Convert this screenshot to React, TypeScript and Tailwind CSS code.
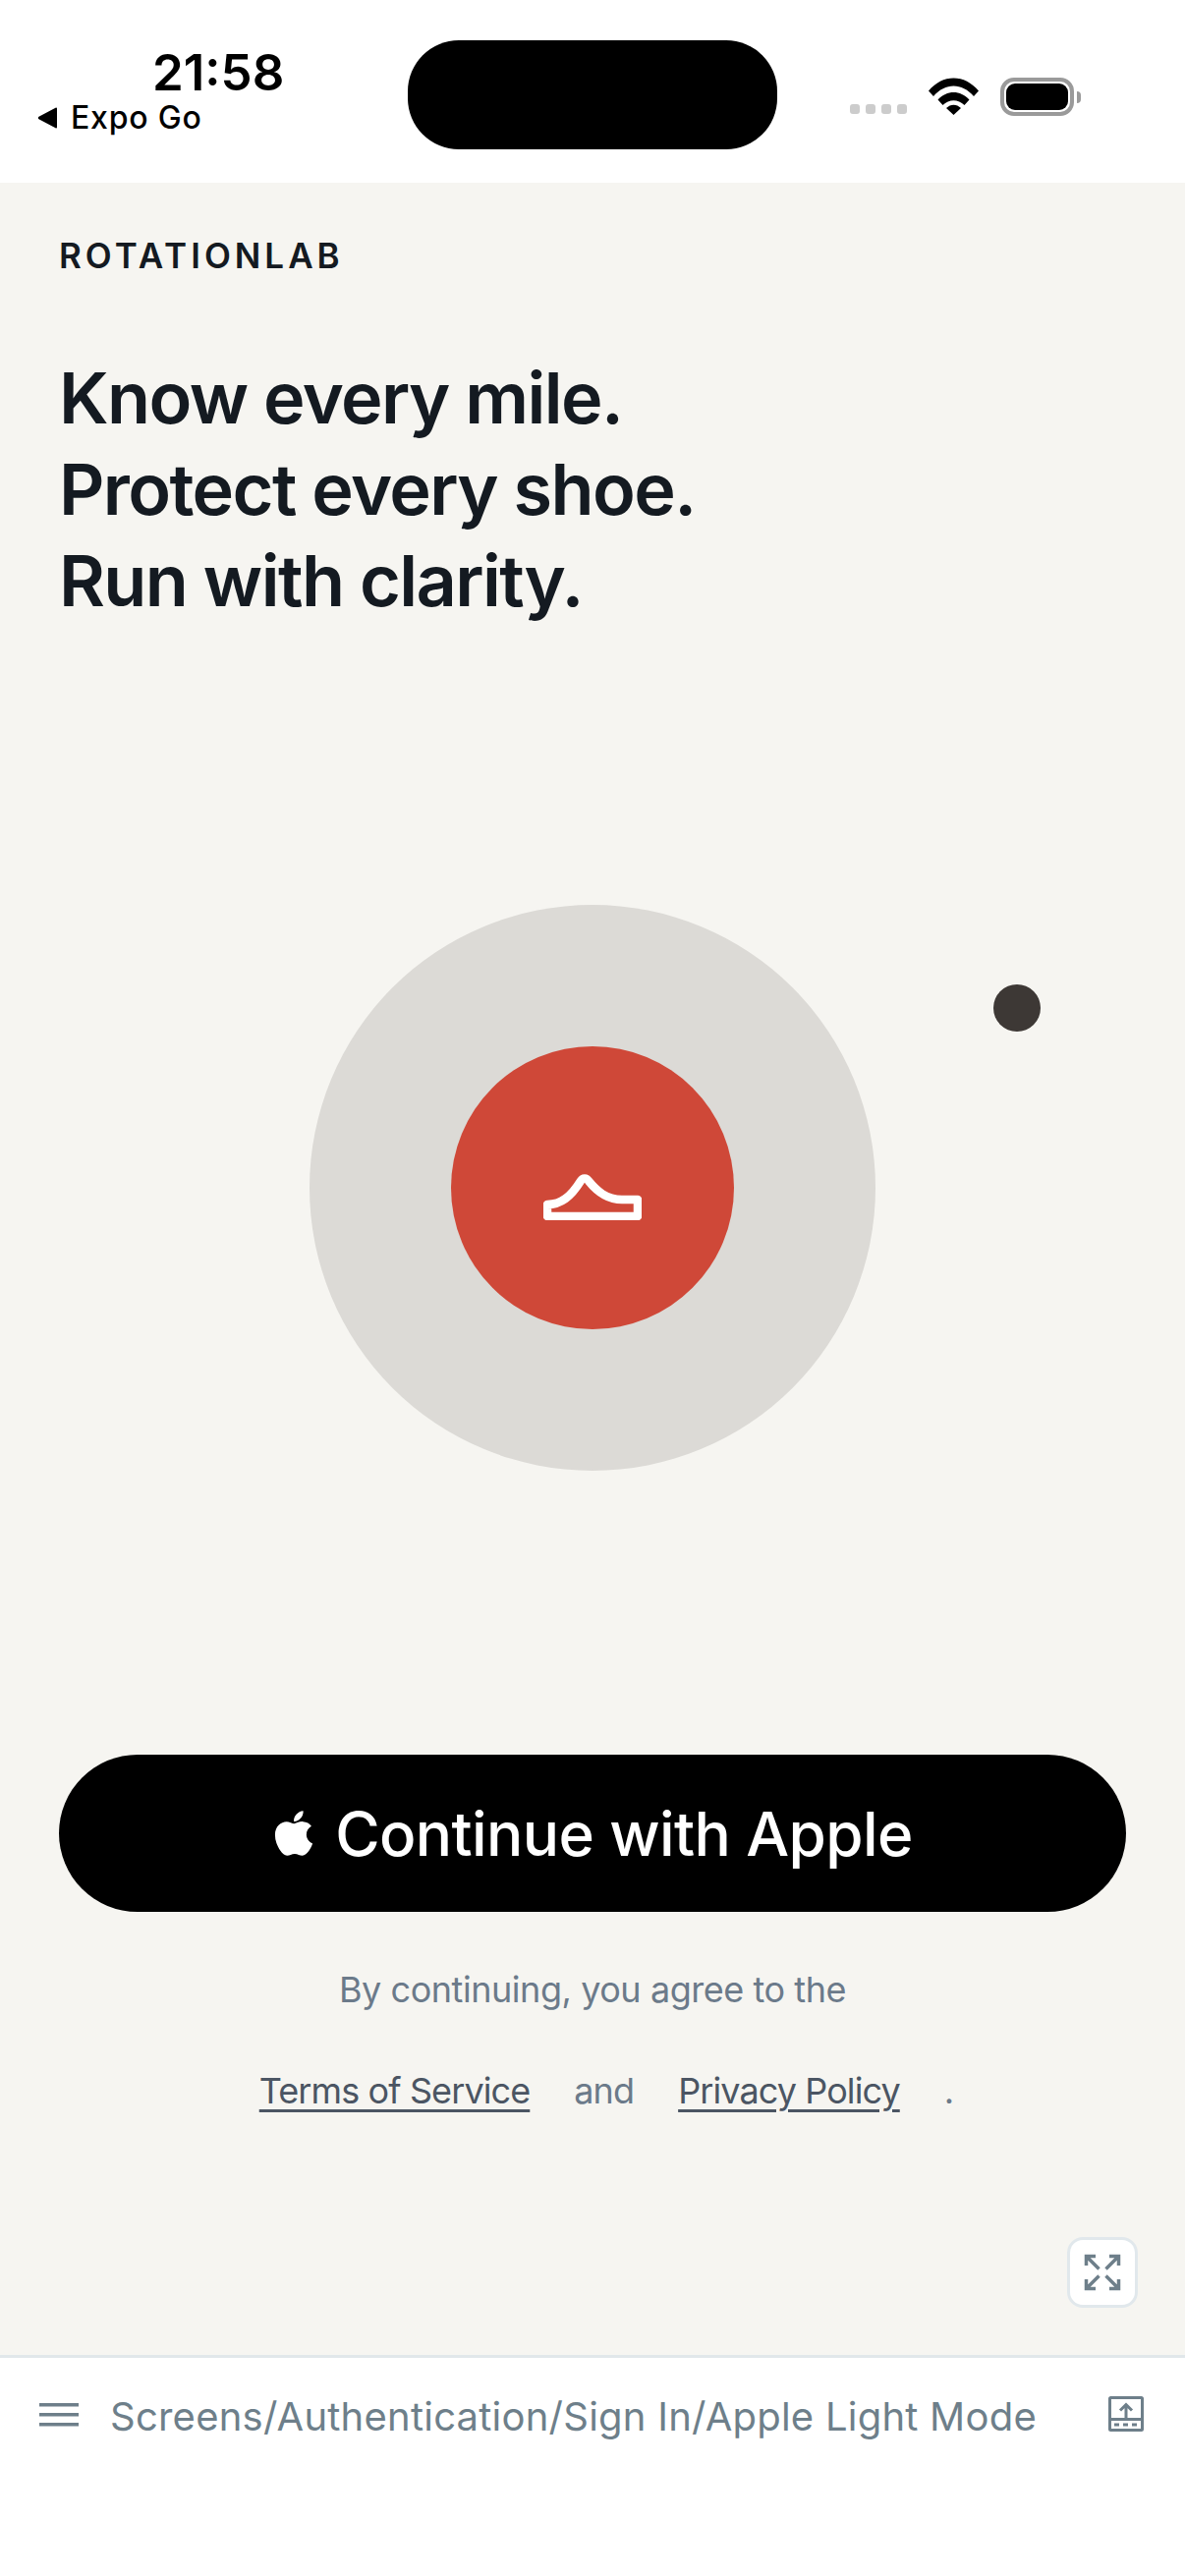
import { FaApple } from "react-icons/fa";

function StatusBar() {
  return (
    <div className="flex h-[186px] shrink-0 bg-white pt-[41px]">
      <div className="w-[415px] pl-[38px]">
        <div className="pl-[117px] pt-[11px] text-[51px] leading-[44px] font-semibold text-black">
          21:58
        </div>
        <div className="mt-[6px] flex items-center">
          <svg width="22" height="22" viewBox="0 0 22 22" className="mr-[12px]">
            <path d="M20 1.5v19a1 1 0 0 1-1.5.8L1.5 12.2a1.4 1.4 0 0 1 0-2.4L18.5.7A1 1 0 0 1 20 1.5z" fill="#000" />
          </svg>
          <span className="text-[32px] leading-[36px] font-medium text-black tracking-[0.8px]">Expo Go</span>
        </div>
      </div>
      <div className="h-[111px] w-[376px] rounded-[52px] bg-black" />
      <div className="flex h-[76px] flex-1 items-end pl-[74px]">
        <div className="flex gap-[6px] pb-[1px]">
          <span className="h-[10px] w-[10px] rounded-[3px] bg-[#cccccc]" />
          <span className="h-[10px] w-[10px] rounded-[3px] bg-[#cccccc]" />
          <span className="h-[10px] w-[10px] rounded-[3px] bg-[#cccccc]" />
          <span className="h-[10px] w-[10px] rounded-[3px] bg-[#cccccc]" />
        </div>
        <svg width="51" height="38" viewBox="0 0 51 38" className="ml-[22px]">
          <path d="M0 13.5C14-4 37-4 51 13.5l-5 5.5C34 5 17 5 5 19z" fill="#000" />
          <path d="M9.5 22.5c9-10 23-10 32 0l-5 5.500c-6.500-6.500-15.500-6.500-22 0z" fill="#000" />
          <path d="M18 31c4.500-4.500 10.500-4.500 15 0l-7.500 7z" fill="#000" />
        </svg>
        <div className="ml-[22px] mb-[-1px] flex items-center">
          <div className="h-[39px] w-[75px] rounded-[14px] border-[4px] border-[#9a9a9a] p-[2px]">
            <div className="h-full w-full rounded-[9px] bg-black" />
          </div>
          <div className="ml-[3px] h-[12px] w-[4px] rounded-r-[4px] bg-[#9a9a9a]" />
        </div>
      </div>
    </div>
  );
}

function Hero() {
  return (
    <div className="relative mt-[284px] flex h-[576px] w-[576px] items-center justify-center self-center rounded-full bg-[#dcdad6]">
      <div className="flex h-[288px] w-[288px] items-center justify-center rounded-full bg-[#cf4838]">
        <svg width="100" height="48" viewBox="0 0 100 48" fill="none" className="mt-[18px]">
          <path
            d="M4 44V32C18 32 28 24 38 8C40 4.500 44 4.500 46 8C54 18 64 27 80 27H96V44Z"
            stroke="#fff"
            strokeWidth="8.500"
            strokeLinejoin="round"
          />
        </svg>
      </div>
      {/* orbiting dot */}
      <div className="absolute left-[696px] top-[81px] h-[48px] w-[48px] rounded-full bg-[#3d3835]" />
    </div>
  );
}

export default function App() {
  return (
    <div className="flex h-[2622px] w-[1206px] flex-col bg-white font-['Inter',sans-serif]">
      <StatusBar />
      <div className="relative flex flex-1 flex-col bg-[#f6f5f1] px-[60px]">
        <div className="mt-[52px] text-[35px] leading-[44px] font-semibold tracking-[4px] text-[#141a21]">
          ROTATIONLAB
        </div>
        <h1 className="mt-[76px] text-[72px] leading-[93px] font-semibold tracking-[-1.6px] text-[#141a21]">
          Know every mile.
          <br />
          Protect every shoe.
          <br />
          Run with clarity.
        </h1>
        <Hero />
        <button className="mt-[289px] flex h-[160px] w-full items-center justify-center gap-[20px] rounded-[80px] bg-black text-[62px] font-medium tracking-[-0.6px] text-white">
          <FaApple className="h-[52px] w-[44px]" />
          Continue with Apple
        </button>
        <p className="mt-[55px] text-center text-[36px] leading-[48px] tracking-[-0.45px] text-[#6b7a8a]">
          By continuing, you agree to the
        </p>
        <div className="mt-[55px] flex items-center justify-center gap-[45px] pl-[28px] text-[36px] leading-[48px] tracking-[-0.9px] text-[#6b7a8a]">
          <a className="text-[#4b5563] underline underline-offset-[6px]">Terms of Service</a>
          <span>and</span>
          <a className="text-[#4b5563] underline underline-offset-[6px]">Privacy Policy</a>
          <span>.</span>
        </div>
        <div className="absolute right-[48px] bottom-[48px] flex h-[72px] w-[72px] items-center justify-center rounded-[16px] border-[3px] border-[#e1e8ec] bg-white">
          <svg width="38" height="38" viewBox="0 0 38 38" fill="none" stroke="#6e7f8a" strokeWidth="3.500">
            <path d="M2.500 12V2.500H12M3 3L15.500 15.500" />
            <path d="M26 2.500H35.500V12M35 3L22.500 15.500" />
            <path d="M2.500 26V35.500H12M3 35L15.500 22.500" />
            <path d="M26 35.500H35.500V26M35 35L22.500 22.500" />
          </svg>
        </div>
      </div>
      <div className="flex h-[225px] shrink-0 items-start border-t-[3px] border-[#e1e7ea] bg-white pt-[35px] pl-[40px]">
        <svg width="40" height="24" viewBox="0 0 40 24" className="mt-[11px]" fill="#6e7f8a">
          <rect y="0" width="40" height="3.500" />
          <rect y="10" width="40" height="3.500" />
          <rect y="20" width="40" height="3.500" />
        </svg>
        <span className="ml-[32px] text-[40px] leading-[50px] tracking-[0.23px] text-[#6e7f8a]">
          Screens/Authentication/Sign In/Apple Light Mode
        </span>
        <svg width="36" height="36" viewBox="0 0 36 36" className="mt-[4px] ml-auto mr-[42px]" fill="none" stroke="#6e7f8a" strokeWidth="3">
          <rect x="1.500" y="1.500" width="33" height="33" rx="1" />
          <path d="M1.500 23.500H34.500" />
          <path d="M18 23V9M12 14.500L18 8.500L24 14.500" />
          <path d="M6 29H30" strokeDasharray="5 4" />
        </svg>
      </div>
    </div>
  );
}
